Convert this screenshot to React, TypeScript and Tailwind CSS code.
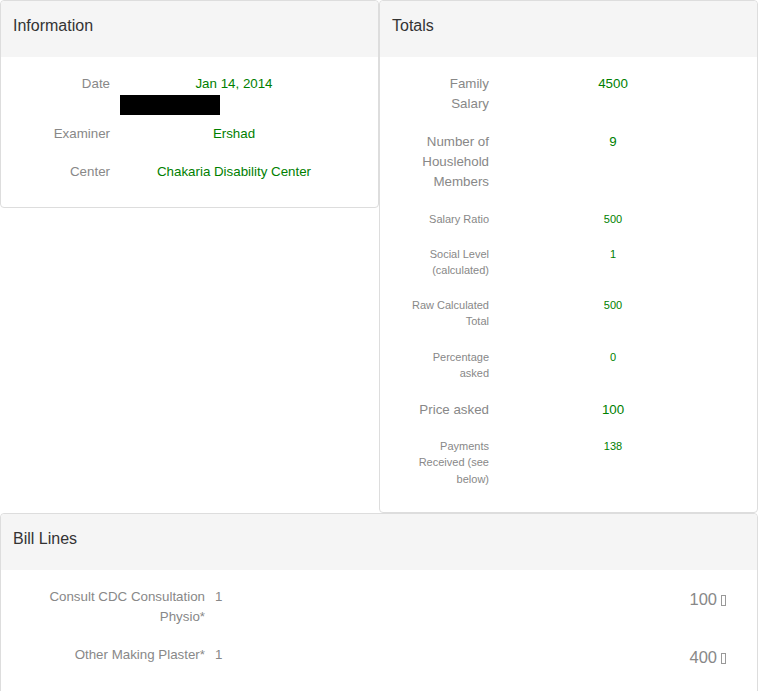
import type { ReactNode } from "react";

const LABEL = "text-[#888]";
const VALUE = "text-[#008000]";

function Panel({
  title,
  className = "",
  children,
}: {
  title: string;
  className?: string;
  children: ReactNode;
}) {
  return (
    <div className={`rounded-[4px] border border-[#ddd] bg-white ${className}`}>
      <div className="h-[56px] rounded-t-[4px] bg-[#f5f5f5] px-[12px] pt-[14px]">
        <h3 className="text-[16px] leading-[22px] text-[#333]">{title}</h3>
      </div>
      {children}
    </div>
  );
}

function Row({
  label,
  value,
  small = false,
  className = "",
}: {
  label: string;
  value: string;
  small?: boolean;
  className?: string;
}) {
  const size = small ? "text-[11px] leading-[16.5px]" : "text-[13.33px] leading-[20px]";
  return (
    <div className={`flex items-start ${size} ${className}`}>
      <div className={`ml-[31px] w-[78px] text-right ${LABEL}`}>{label}</div>
      <div className={`ml-[10px] w-[228px] text-center ${VALUE}`}>{value}</div>
    </div>
  );
}

function Tofu() {
  return (
    <span className="ml-[4px] inline-block h-[11px] w-[5px] border border-[#999] align-[-1px]" />
  );
}

function BillLine({
  label,
  qty,
  amount,
  className = "",
}: {
  label: string;
  qty: number;
  amount: number;
  className?: string;
}) {
  return (
    <div className={`flex items-start ${className}`}>
      <div className={`ml-[29px] w-[175px] text-right text-[13.33px] leading-[20px] ${LABEL}`}>
        {label}
      </div>
      <div className={`ml-[10px] text-[13.33px] leading-[20px] ${LABEL}`}>{qty}</div>
      <div className={`flex-1 pr-[31px] text-right text-[16.5px] leading-[24px] ${LABEL}`}>
        {amount}
        <Tofu />
      </div>
    </div>
  );
}

export default function App() {
  return (
    <div className="w-[758px] bg-white font-['Liberation_Sans',Arial,sans-serif]">
      <div className="flex items-start">
        <Panel title="Information" className="w-[379px]">
          <div className="pt-[17px] pb-[25px]">
            <Row label="Date" value="Jan 14, 2014" />
            <div className="ml-[119px] mt-[1px] h-[20px] w-[100px] bg-black" />
            <Row label="Examiner" value="Ershad" className="mt-[9px]" />
            <Row label="Center" value="Chakaria Disability Center" className="mt-[18px]" />
          </div>
        </Panel>
        <Panel title="Totals" className="w-[379px]">
          <div className="pt-[17px] pb-[25px]">
            <Row label="Family Salary" value="4500" />
            <Row label="Number of Houslehold Members" value="9" className="mt-[18px]" />
            <Row label="Salary Ratio" value="500" small className="mt-[19px]" />
            <Row label="Social Level (calculated)" value="1" small className="mt-[18px]" />
            <Row label="Raw Calculated Total" value="500" small className="mt-[18px]" />
            <Row label="Percentage asked" value="0" small className="mt-[19px]" />
            <Row label="Price asked" value="100" className="mt-[18px]" />
            <Row label="Payments Received (see below)" value="138" small className="mt-[18px]" />
          </div>
        </Panel>
      </div>
      <Panel title="Bill Lines" className="w-[758px]">
        <div className="pt-[17px] pb-[25px]">
          <BillLine label="Consult CDC Consultation Physio*" qty={1} amount={100} />
          <BillLine label="Other Making Plaster*" qty={1} amount={400} className="mt-[18px]" />
        </div>
      </Panel>
    </div>
  );
}
